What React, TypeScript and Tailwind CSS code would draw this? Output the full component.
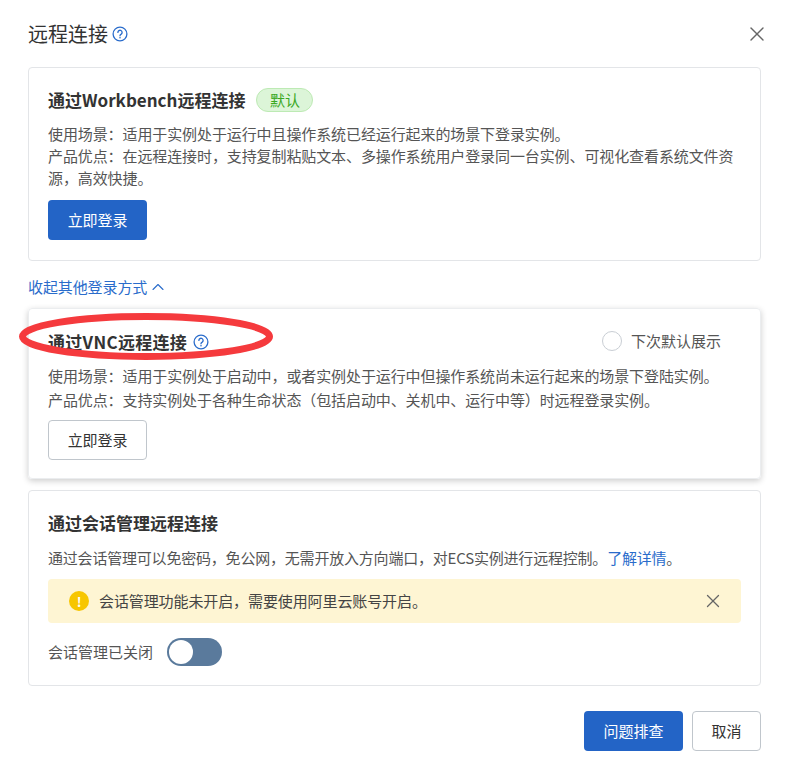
import { useState } from 'react';
import { ChevronUp, X } from 'lucide-react';

const FONT = "font-['Noto_Sans_CJK_SC','Noto_Sans',sans-serif]";

function HelpIcon({ className }: { className?: string }) {
  return (
    <svg viewBox="0 0 16 16" className={className} fill="none" stroke="#2a6ccb">
      <circle cx="8" cy="8" r="6.9" strokeWidth="1.3" />
      <path d="M5.9 6.4a2.1 2.1 0 1 1 3.3 1.7c-.8.5-1.2.9-1.2 1.7" strokeWidth="1.3" strokeLinecap="round" />
      <circle cx="8" cy="11.7" r=".8" fill="#2a6ccb" stroke="none" />
    </svg>
  );
}

function LoginButton({ primary }: { primary?: boolean }) {
  return (
    <button
      className={
        primary
          ? 'h-10 w-[99px] rounded-sm bg-[#2364c6] text-[15px] text-white'
          : 'h-10 w-[99px] rounded-sm border border-[#c0c6cc] bg-white text-[15px] text-[#333333]'
      }
    >
      立即登录
    </button>
  );
}

export default function App() {
  const [sessionOn, setSessionOn] = useState(false);

  return (
    <div className={`${FONT} h-[764px] w-[789px] bg-white px-[28px] text-[15px] tracking-[-0.1px] text-[#555555]`}>
      <header className="flex h-[67px] items-center justify-between">
        <div className="flex items-center gap-[4px]">
          <h1 className="text-xl leading-7 font-normal tracking-normal text-[#333333]">远程连接</h1>
          <HelpIcon className="h-4 w-4" />
        </div>
        <X className="mr-[-8px] h-6 w-6 text-[#666666]" strokeWidth={1.4} />
      </header>

      <section className="h-[194px] rounded border border-[#e3e5e8] px-[19px] pt-[19px]">
        <div className="flex h-[26px] items-center gap-[11px]">
          <h2 className="text-[17px] leading-[26px] font-bold tracking-normal text-[#333333]">通过Workbench远程连接</h2>
          <span className="flex h-6 w-[57px] items-center justify-center rounded-full border border-[#bdeab4] bg-[#dcf5d8] text-[15px] text-[#3aa81f]">
            默认
          </span>
        </div>
        <p className="mt-[10px] leading-[22px]">使用场景：适用于实例处于运行中且操作系统已经运行起来的场景下登录实例。</p>
        <p className="leading-[22px]">
          产品优点：在远程连接时，支持复制粘贴文本、多操作系统用户登录同一台实例、可视化查看系统文件资源，高效快捷。
        </p>
        <div className="mt-[11px]">
          <LoginButton primary />
        </div>
      </section>

      <a className="mt-[15px] flex h-[22px] items-center text-[15px] text-[#2a6ccb]">
        收起其他登录方式
        <ChevronUp className="ml-[1px] h-5 w-5" strokeWidth={1.3} />
      </a>

      <section className="relative mt-[10px] h-[171px] rounded border border-[#ebedef] px-[19px] pt-[20px] shadow-[0_2px_6px_rgba(0,0,0,0.2)]">
        <div className="flex h-[26px] items-center justify-between">
          <div className="flex items-center gap-[6px]">
            <h2 className="text-[17px] leading-[26px] font-bold tracking-[0.3px] text-[#333333]">通过VNC远程连接</h2>
            <HelpIcon className="h-4 w-4" />
          </div>
          <label className="mr-[20px] mb-[2px] flex items-center gap-[9px]">
            <span className="h-5 w-5 rounded-full border border-[#c9ced4] bg-white" />
            <span className="text-[15px] tracking-normal text-[#555555]">下次默认展示</span>
          </label>
        </div>
        <p className="mt-[10px] leading-[22px]">使用场景：适用于实例处于启动中，或者实例处于运行中但操作系统尚未运行起来的场景下登陆实例。</p>
        <p className="mt-[2px] leading-[22px]">产品优点：支持实例处于各种生命状态（包括启动中、关机中、运行中等）时远程登录实例。</p>
        <div className="mt-[9px]">
          <LoginButton />
        </div>
        {/* red marker drawn over the heading */}
        <svg className="absolute top-[4px] left-[-10px] h-[47px] w-[256px]" viewBox="0 0 256 47" fill="none">
          <ellipse cx="127" cy="23.5" rx="123.5" ry="20" stroke="#f53a3d" strokeWidth="7" />
        </svg>
      </section>

      <section className="mt-[11px] h-[196px] rounded border border-[#e3e5e8] px-[19px] pt-[19px]">
        <h2 className="text-[17px] leading-[26px] font-bold tracking-normal text-[#333333]">通过会话管理远程连接</h2>
        <p className="mt-[11px] leading-[22px] tracking-[-0.2px]">
          通过会话管理可以免密码，免公网，无需开放入方向端口，对ECS实例进行远程控制。
          <a className="text-[#2a6ccb]">了解详情</a>。
        </p>
        <div className="mt-[10px] flex h-[44px] items-center justify-between rounded-sm bg-[#fef5d3] pr-[17px] pl-[21px]">
          <div className="flex items-center gap-[10px]">
            <span className="flex h-5 w-5 items-center justify-center rounded-full bg-[#f7c600] text-[13px] leading-none font-bold text-white">
              !
            </span>
            <span className="text-[#444444]">会话管理功能未开启，需要使用阿里云账号开启。</span>
          </div>
          <X className="h-[22px] w-[22px] text-[#666666]" strokeWidth={1.4} />
        </div>
        <div className="mt-[15px] flex items-center gap-[14px]">
          <span className="tracking-normal text-[#555555]">会话管理已关闭</span>
          <button
            onClick={() => setSessionOn(!sessionOn)}
            className="flex h-7 w-[55px] items-center rounded-full bg-[#5a7a9c] px-[2px]"
          >
            <span className="h-6 w-6 rounded-full bg-white" />
          </button>
        </div>
      </section>

      <footer className="mt-[25px] flex justify-end gap-[9px]">
        <button className="h-10 w-[99px] rounded-sm bg-[#2364c6] text-[15px] tracking-normal text-white">问题排查</button>
        <button className="h-10 w-[69px] rounded-sm border border-[#c0c6cc] bg-white text-[15px] tracking-normal text-[#333333]">取消</button>
      </footer>
    </div>
  );
}
